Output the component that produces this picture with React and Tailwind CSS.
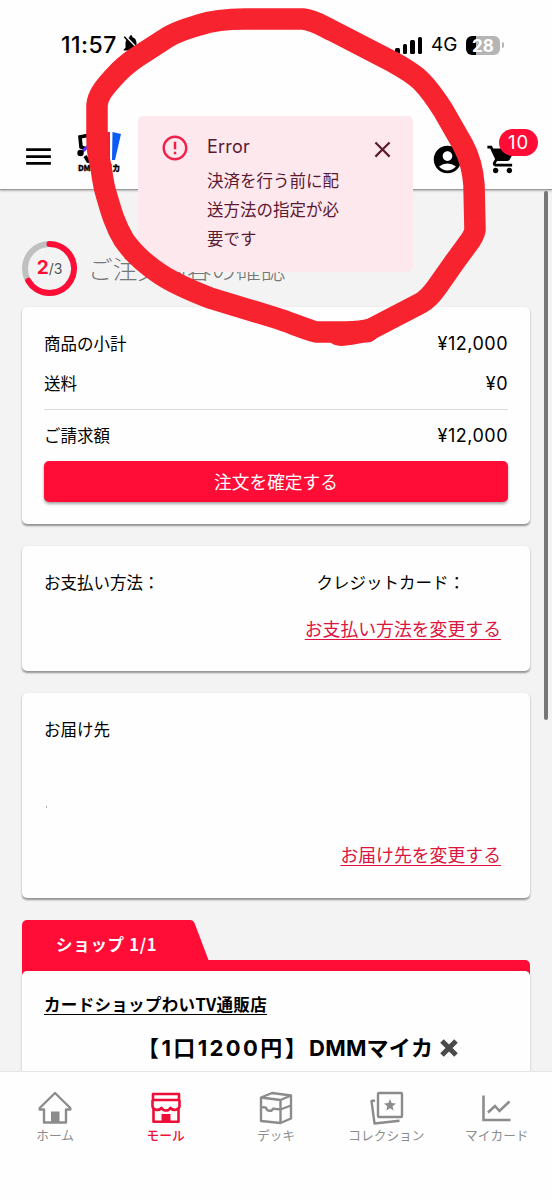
import { MdMenu, MdAccountCircle, MdShoppingCart, MdErrorOutline, MdClose, MdNotificationsOff } from "react-icons/md";

const tabs = [
  { label: "ホーム", icon: <HomeIcon /> },
  { label: "モール", icon: <MallIcon />, active: true },
  { label: "デッキ", icon: <DeckIcon /> },
  { label: "コレクション", icon: <CollectionIcon /> },
  { label: "マイカード", icon: <ChartIcon /> },
];

function HomeIcon() {
  return (
    <svg width="36" height="36" viewBox="0 0 36 36" fill="none" stroke="currentColor" strokeWidth="2.4" strokeLinejoin="round">
      <path d="M7 20.5H2.7V19L18 4l15.300 15v1.500H29V33.500H7z" />
      <path d="M14 22.500h8.500v11H14z" fill="currentColor" stroke="none" />
    </svg>
  );
}

function MallIcon() {
  return (
    <svg width="36" height="36" viewBox="0 0 36 36" fill="none" stroke="currentColor" strokeWidth="2.600" strokeLinejoin="round">
      <path d="M5 5h26v6H5zM5.500 19v13.800h25V19" />
      <path d="M4.500 11v6c0 3.500 6.500 5.700 9 1.800 2 3.600 7 3.600 9 0 2.500 3.900 9 1.700 9-1.800v-6" />
      <path d="M13.500 25h9v8h-9z" fill="currentColor" stroke="none" />
    </svg>
  );
}

function DeckIcon() {
  return (
    <svg width="36" height="36" viewBox="0 0 36 36" fill="none" stroke="currentColor" strokeWidth="2.400" strokeLinejoin="round">
      <path d="M3 8.500L14 4 33 6.500V29.500L22.500 34 3 32z" />
      <path d="M3 8.500l19.500 2.500L33 6.500M22.500 11v23M3 18l5 .6c.5 3.500 6 4.500 7 1l7.500.9L33 16.500" />
    </svg>
  );
}

function CollectionIcon() {
  return (
    <svg width="36" height="36" viewBox="0 0 36 36" fill="none" stroke="currentColor" strokeWidth="2.400" strokeLinejoin="round">
      <rect x="10" y="4" width="24" height="24" rx="1" />
      <path d="M7 11.500l-3.500.5L6.500 34.500l25-2.700" />
      <path d="M22 10l1.600 4.100 4.400.3-3.400 2.900 1 4.300-3.600-2.400-3.700 2.400 1-4.300-3.300-2.900 4.400-.3z" fill="currentColor" stroke="none" />
    </svg>
  );
}

function ChartIcon() {
  return (
    <svg width="36" height="36" viewBox="0 0 36 36" fill="none" stroke="currentColor" strokeWidth="2.600">
      <path d="M4.500 6.500V31h27M9 23.500l7-6.500 4.500 5 10-9.500" />
    </svg>
  );
}

function Logo() {
  return (
    <div className="flex w-[44px] flex-col items-center">
      <svg width="44" height="32" viewBox="0 0 44 32" fill="none">
        <path d="M13 3L3 5l1 10 5 2M8 24l3 5 8 1" stroke="#000" strokeWidth="3.600" />
        <path d="M3 22l7-7 6 5" stroke="#5b2cff" strokeWidth="3" />
        <circle cx="3.500" cy="21" r="3.200" fill="#000" />
        <path d="M27 0l6-1v28h-6z" fill="#f21f32" />
        <path d="M35.500 0l8.500 2-6 26h-3z" fill="#0a5cf5" />
      </svg>
      <span className="-mt-px whitespace-nowrap text-[8px] leading-[9px] font-black tracking-[-0.300px] [-webkit-text-stroke:0.300px_black]">DMMマイカ</span>
    </div>
  );
}

function StatusBar() {
  return (
    <div className="flex h-[90px] items-center pl-[61px] font-['Inter',sans-serif]">
      <span className="w-[61px] text-[23px] font-medium tracking-[0.500px]">11:57</span>
      <MdNotificationsOff size={22} className="-ml-[2px] -mt-[2px] shrink-0" />
      <div className="ml-[253px] flex h-[17px] shrink-0 items-end gap-[3px]">
        <i className="h-[6px] w-[4.500px] rounded-[1.500px] bg-black" />
        <i className="h-[10px] w-[4.500px] rounded-[1.500px] bg-black" />
        <i className="h-[14px] w-[4.500px] rounded-[1.500px] bg-black" />
        <i className="h-[17px] w-[4.500px] rounded-[1.500px] bg-black" />
      </div>
      <span className="ml-[9px] w-[27px] text-[19px]">4G</span>
      <div className="ml-[8px] flex h-[19px] w-[34px] shrink-0 items-center justify-center rounded-[6px] bg-linear-to-r from-black from-[10px] to-[#b5b5b5] to-[10px] pt-px text-[17px] leading-[18px] font-bold text-white">28</div>
      <i className="ml-[1.500px] h-1.5 w-[2px] rounded-r bg-[#b5b5b5]" />
    </div>
  );
}

function Header() {
  return (
    <header className="z-10 h-[190px] shrink-0 border-b border-[#999] bg-[#fefefe] shadow-[0_1px_2px_rgba(0,0,0,0.250)]">
      <StatusBar />
      <div className="flex h-[99px] items-start pl-[22px] pt-[40px]">
        <MdMenu size={33} className="mt-[10px]" />
        <div className="ml-[22px] mt-[2px]">
          <Logo />
        </div>
        <MdAccountCircle size={33} className="ml-[310px] mt-[13px]" />
        <div className="relative ml-[22px] mt-[13px]">
          <MdShoppingCart size={33} />
          <span className="absolute -top-[14px] left-[13px] flex h-[27px] w-[39px] items-center justify-center rounded-full bg-[#ff0d36] font-['Inter',sans-serif] text-[18.500px] tracking-[1px] text-white">10</span>
        </div>
      </div>
    </header>
  );
}

function Toast() {
  return (
    <div className="absolute left-[138px] top-[116px] z-20 flex h-[156px] w-[275px] rounded-[5px] bg-[#fde8ed] text-[#5c1a33]">
      <MdErrorOutline size={30} className="ml-[22px] mt-[17px] shrink-0 text-[#f0204a]" />
      <div className="ml-[17px] mt-[16px] w-[136px]">
        <p className="font-['Inter',sans-serif] text-[18px] leading-[29px] tracking-[0.200px]">Error</p>
        <p className="mt-[5px] text-[16.500px] leading-[29px]">決済を行う前に配送方法の指定が必要です</p>
      </div>
      <MdClose size={27} className="ml-[26px] mt-[20px] shrink-0" />
    </div>
  );
}

function Row({ label, price }) {
  return (
    <div className="flex h-[40px] items-center justify-between">
      <span>{label}</span>
      <span className="mt-px font-['Inter',sans-serif] text-[18px] tracking-[0.500px]">{price}</span>
    </div>
  );
}

function Card({ className, children }) {
  return (
    <section className={`rounded-[5px] bg-[#fefefe] px-[22px] shadow-[0_1.500px_2px_rgba(0,0,0,0.400)] ${className}`}>
      {children}
    </section>
  );
}

function Step() {
  return (
    <div className="flex h-[55px] items-center">
      <div className="relative h-[55px] w-[55px]">
        <svg width="55" height="55" viewBox="0 0 55 55" fill="none" strokeWidth="6">
          <circle cx="27.500" cy="27.500" r="24.500" stroke="#c0c0c0" />
          <path d="M27.500 3A24.500 24.500 0 1 1 6.280 39.750" stroke="#ff0d36" strokeLinecap="round" />
        </svg>
        <div className="absolute inset-0 flex items-center justify-center font-['Inter',sans-serif] text-[14px] text-[#555]">
          <b className="text-[19px] text-[#ff0d36]">2</b>/3
        </div>
      </div>
      <h1 className="ml-[11px] text-[24.700px] font-light text-[#777]">ご注文内容の確認</h1>
    </div>
  );
}

// 手書きの赤丸
function Scribble() {
  return (
    <svg className="pointer-events-none absolute left-0 top-0 z-30" width="552" height="400" viewBox="0 0 552 400" fill="none">
      <path
        d="M97 105C98 95 104 88 113 78C120 70 128 63 137 57L168 37C178 31 189 28 199 25C214 20 230 19 245 19H303C314 20 323 26 333 31L393 62C404 68 413 73 421 81C429 89 436 99 443 110L463 145C470 158 473 171 474 185L475 230C474 236 471 240 467 245L456 260L437 287C432 294 428 299 421 303L371 329C362 332 355 332 345 332H316C302 328 289 322 276 318L210 298C192 291 175 284 160 274C145 264 133 253 124 240C114 224 110 207 105 190C103 182 102 174 101 167C97 151 97 145 97 133Z"
        stroke="#f7232e"
        strokeWidth="21.500"
        strokeLinejoin="round"
      />
      <path d="M326 335Q329 346 342 346Q353 345 362 343L371 342Q378 339 380 331L350 325z" fill="#f7232e" />
    </svg>
  );
}

function BottomNav() {
  return (
    <nav className="absolute inset-x-0 bottom-0 z-10 grid h-[129px] grid-cols-5 border-t border-[#e6e6e6] bg-[#fefefe] pt-[17px]">
      {tabs.map((tab) => (
        <div key={tab.label} className={`flex flex-col items-center ${tab.active ? "font-medium text-[#ee0f38]" : "text-[#8c8c8c]"}`}>
          {tab.icon}
          <span className="mt-px whitespace-nowrap text-[12.700px] leading-[18px]">{tab.label}</span>
        </div>
      ))}
    </nav>
  );
}

export default function App() {
  return (
    <div className="relative flex h-[1200px] w-[552px] flex-col overflow-hidden bg-[#f3f3f3] font-['Noto_Sans_CJK_JP',sans-serif] text-[16.500px] text-black">
      <Header />
      <Toast />
      <main className="px-[22px] pt-[51px]">
        <Step />
        <Card className="mt-[11px] h-[217px] pt-[16px]">
          <Row label="商品の小計" price="¥12,000" />
          <Row label="送料" price="¥0" />
          <hr className="mb-[5px] mt-[6px] border-[#d9d9d9]" />
          <Row label="ご請求額" price="¥12,000" />
          <button className="mt-[6px] h-[41px] w-full rounded-[5px] bg-[#ff0d36] text-[17.700px] text-white shadow-[0_2px_3px_rgba(0,0,0,0.350)]">注文を確定する</button>
        </Card>
        <Card className="mt-[22px] h-[125px] pt-[24px]">
          <div className="flex justify-between leading-[25px]">
            <span>お支払い方法：</span>
            <span className="pr-[43px]">クレジットカード：</span>
          </div>
          <div className="mt-[19px] pr-[7px] text-right text-[17.850px] leading-[28px] text-[#dc1440]">
            <a className="underline underline-offset-[3px]">お支払い方法を変更する</a>
          </div>
        </Card>
        <Card className="mt-[22px] flex h-[205px] flex-col pt-[24px]">
          <span className="leading-[25px]">お届け先</span>
          <i className="ml-[2px] mt-[64px] h-[2px] w-px bg-[#aaa]" />
          <div className="mt-[32px] pr-[7px] text-right text-[17.850px] leading-[28px] text-[#dc1440]">
            <a className="underline underline-offset-[3px]">お届け先を変更する</a>
          </div>
        </Card>
        <section className="mt-[22px]">
          <div className="flex">
            <h2 className="h-[40px] w-[164px] rounded-tl-[5px] bg-[#ff0d36] pl-[34px] text-[16.500px] leading-[49px] font-bold tracking-[0.700px] text-white">ショップ 1/1</h2>
            <svg width="24" height="40" viewBox="0 0 24 40">
              <path d="M0 0H4Q7 0 8.500 3L22.500 40H0z" fill="#ff0d36" />
            </svg>
          </div>
          <div className="h-[150px] rounded-tr-[5px] bg-linear-to-b from-[#ff0d36] from-[20px] to-transparent to-[20px] pt-[11px]">
            <div className="h-[140px] rounded-t-[5px] bg-[#fefefe] px-[22px] pt-[19px] shadow-[0_1px_3px_rgba(0,0,0,0.200)]">
              <p className="text-[16.500px] leading-[28px] font-bold tracking-[0.320px] underline underline-offset-[3px]">カードショップわいTV通販店</p>
              <h3 className="mt-[16px] flex items-center whitespace-nowrap pl-[93px] font-['Inter','Noto_Sans_CJK_JP',sans-serif] text-[22px] leading-[28px] font-bold">
                <span className="tracking-[2.400px]">【1口1200円】</span>
                <span className="tracking-[0.200px]">DMMマイカ</span>
                <svg className="ml-[6px]" width="20" height="20" viewBox="0 0 20 20" stroke="#4a4a4a" strokeWidth="5">
                  <path d="M3 3l14 14M17 3L3 17" />
                </svg>
              </h3>
            </div>
          </div>
        </section>
      </main>
      <div className="absolute left-[544px] top-[191px] h-[529px] w-[4px] rounded-full bg-[#777]" />
      <BottomNav />
      <Scribble />
    </div>
  );
}
